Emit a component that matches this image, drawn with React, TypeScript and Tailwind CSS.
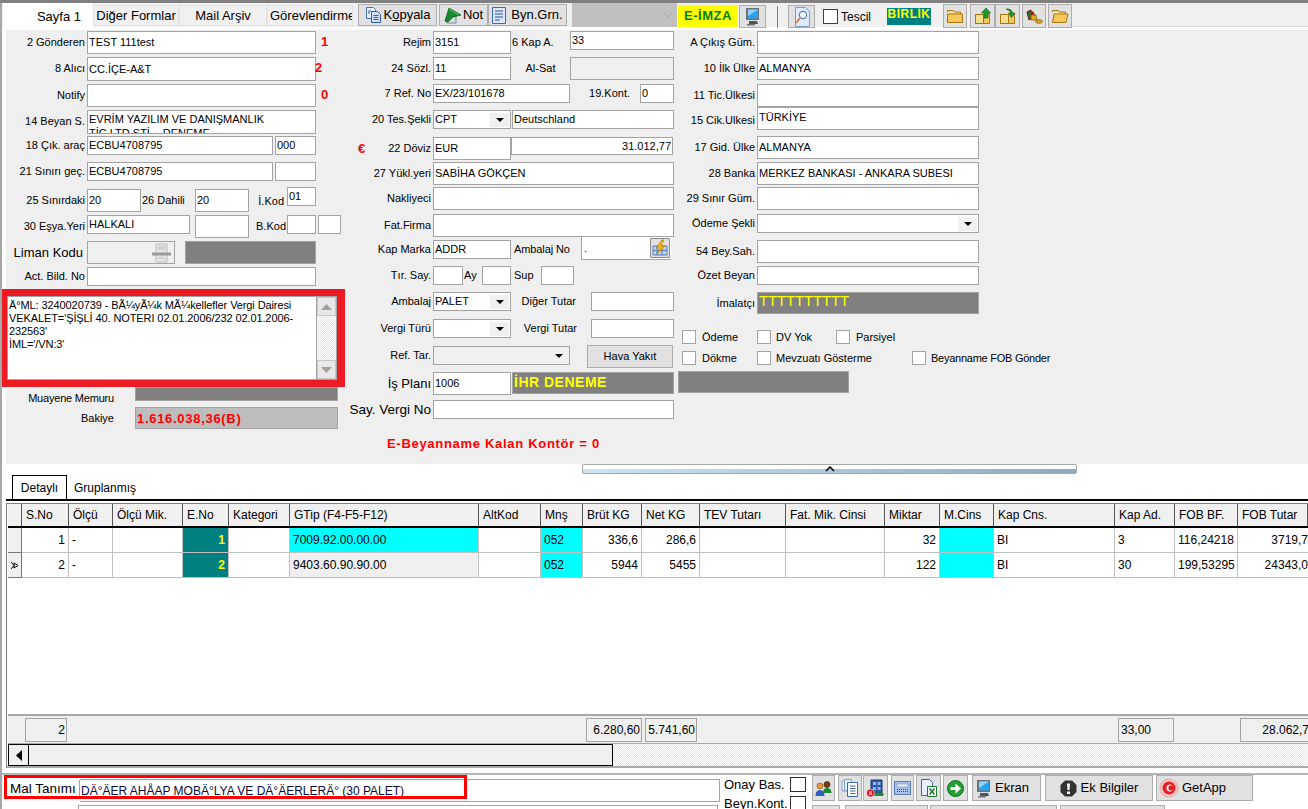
import type { ReactNode } from 'react'

// Gümrük beyanname formu ekranı

type BoxProps = { className?: string; children?: ReactNode }

function Field({ className = '', children }: BoxProps) {
  return (
    <div className={`flex shrink-0 items-center overflow-hidden whitespace-nowrap border border-[#a3a3a3] px-[1px] leading-none ${className}`}>
      {children}
    </div>
  )
}

function Label({ className = '', children }: BoxProps) {
  return <div className={`flex shrink-0 items-center justify-end whitespace-nowrap leading-none ${className}`}>{children}</div>
}

function Arrow() {
  return (
    <span className="flex h-[14px] w-[19px] shrink-0 items-center justify-center bg-[#f0f0f0]">
      <svg width="8" height="4" viewBox="0 0 8 4"><path d="M0 0h8L4 4z" fill="#000" /></svg>
    </span>
  )
}

function Check({ className = '' }: BoxProps) {
  return <span className={`block shrink-0 border border-[#a3a3a3] bg-white ${className}`} />
}

function Btn({ className = '', children }: BoxProps) {
  return (
    <div className={`flex shrink-0 items-center justify-center overflow-hidden whitespace-nowrap border border-[#adadad] bg-[#e1e1e1] ${className}`}>
      {children}
    </div>
  )
}

/* ---- küçük ikonlar ---- */

function PagesIcon() {
  return (
    <svg width="18" height="18" viewBox="0 0 18 18">
      <path d="M1.5 1.5h7l2 2v9h-9z" fill="#e8f0fb" stroke="#4a76b8" />
      <path d="M6.5 5.5h6l3 3v8h-9z" fill="#cfe0f7" stroke="#2f5fa8" />
      <path d="M8.5 9.5h5M8.5 11.5h5M8.5 13.5h5M3 5h3M3 7h2" stroke="#2f5fa8" />
    </svg>
  )
}

function NoteIcon() {
  return (
    <svg width="19" height="19" viewBox="0 0 19 19">
      <path d="M3 10h9v7H3z" fill="#d6dee8" stroke="#7b8794" />
      <path d="M1 15 5 2l12 7-8 2-5 5z" fill="#188a2c" stroke="#0c5c1a" strokeWidth="0.8" />
      <path d="M5 3l10 6" stroke="#5cc46c" />
    </svg>
  )
}

function DocLinesIcon() {
  return (
    <svg width="14" height="17" viewBox="0 0 14 17">
      <path d="M.5.5h13v16H.5z" fill="#dbe7f8" stroke="#3f69ad" />
      <path d="M3 4h8M3 7h8M3 10h8M3 13h5" stroke="#27508f" />
    </svg>
  )
}

function MonitorIcon() {
  return (
    <svg width="16" height="19" viewBox="0 0 16 19">
      <path d="M1 1h13v12H1z" fill="#6c7278" />
      <path d="M3 2.5h10v9H3z" fill="#2aa3ee" />
      <path d="M3 2.5h10L3 9z" fill="#8fd4fb" />
      <path d="M4 14h8l1 3H4z" fill="#4f5459" />
      <path d="M2 17h8v1.5H2z" fill="#777" />
    </svg>
  )
}

function SearchDocIcon() {
  return (
    <svg width="16" height="20" viewBox="0 0 16 20">
      <path d="M1.5.5h10l4 4v15h-14z" fill="#dfeafb" stroke="#7f9ccc" />
      <circle cx="9" cy="8" r="3.6" fill="#fff" stroke="#5478b4" strokeWidth="1.2" />
      <path d="M6 11l-4 5" stroke="#d87a27" strokeWidth="1.8" />
    </svg>
  )
}

function FolderIcon({ open = false }: { open?: boolean }) {
  return (
    <svg width="18" height="15" viewBox="0 0 18 15">
      <path d="M1.5 3V1.5h6l1 1.5h6v2" fill="#f7dd8e" stroke="#a87414" />
      <path d={open ? 'M1.5 13.5 3 5h14l-2 8.5z' : 'M1.5 13.5V5h15v8.5z'} fill="#f5c75a" stroke="#a87414" />
    </svg>
  )
}

function FolderArrowIcon({ turn = false }: { turn?: boolean }) {
  return (
    <svg width="18" height="17" viewBox="0 0 18 17">
      <path d="M1.5 6v9.5h14V6h-5" fill="#f5c75a" stroke="#a87414" />
      <path d="M1.5 6.5h8v9h-8z" fill="#f7dd8e" stroke="#a87414" />
      {turn ? (
        <path d="M7 1c4-.5 6 1 6.5 4H16l-3.5 4.5L9.5 5H12c-.5-1.500-2-2.500-5-4z" fill="#1f9a2e" stroke="#0c5c1a" strokeWidth="0.6" />
      ) : (
        <path d="M12 0l4.500 5H14v5h-4V5H7.500z" fill="#1f9a2e" stroke="#0c5c1a" strokeWidth="0.6" />
      )}
    </svg>
  )
}

function CoinsIcon() {
  return (
    <svg width="17" height="15" viewBox="0 0 17 15">
      <path d="M1 3l4-2 1 8-3 2z" fill="#1c7a30" stroke="#7a1010" />
      <path d="M4 4l3-2 2 4-3 2z" fill="#b31818" />
      <path d="M5 6h5l1 5H5z" fill="#e7ae19" stroke="#7a5a08" strokeWidth="0.8" />
      <ellipse cx="13" cy="12.500" rx="3.500" ry="1.700" fill="#e7ae19" stroke="#7a5a08" strokeWidth="0.8" />
    </svg>
  )
}

function UsersIcon() {
  return (
    <svg width="17" height="17" viewBox="0 0 17 17">
      <circle cx="5" cy="6" r="3" fill="#e59b3a" stroke="#7a4a10" strokeWidth="0.6" />
      <path d="M0.500 16c0-4 1.500-6 4.500-6s4.500 2 4.500 6z" fill="#2e5fc4" />
      <circle cx="12" cy="4.500" r="3" fill="#7a3a12" stroke="#2a1505" strokeWidth="0.6" />
      <path d="M8 13c0-3.500 1.500-5 4-5s4.500 1.500 4.500 5z" fill="#1f8a34" />
    </svg>
  )
}

function ListDocsIcon() {
  return (
    <svg width="18" height="18" viewBox="0 0 18 18">
      <path d="M1 2h7v10H1z" fill="#e6f0fc" stroke="#7fa2d6" />
      <path d="M3.500.5h7v11h-7z" fill="#e6f0fc" stroke="#7fa2d6" />
      <path d="M6.500 3.500h10v14h-10z" fill="#fff" stroke="#3f69ad" />
      <path d="M9 7h5.500M9 9.500h5.500M9 12h5.500M9 14.500h5.500" stroke="#3f69ad" />
    </svg>
  )
}

function BuildingIcon() {
  return (
    <svg width="19" height="19" viewBox="0 0 19 19">
      <path d="M5 1h11v13H5z" fill="#2c5aa5" stroke="#1b3566" />
      <path d="M7 3h3v3H7zM11.500 3h3v3h-3zM7 8h3v3H7zM11.500 8h3v3h-3z" fill="#8fb4ea" />
      <path d="M6 16c4-3 9-3 12-1l-1 2H8z" fill="#20893a" />
      <circle cx="4.500" cy="14" r="4" fill="#d8131b" stroke="#fff" strokeWidth="0.6" />
      <path d="M3 13h3M3 15h3" stroke="#fff" />
    </svg>
  )
}

function KeypadIcon() {
  return (
    <svg width="17" height="14" viewBox="0 0 17 14">
      <path d="M.5.5h16v13H.5z" fill="#a9c2ea" stroke="#5b7bb3" />
      <path d="M3 3h11v3H3z" fill="#e8f0fb" stroke="#5b7bb3" strokeWidth="0.5" />
      <path d="M3 8.500h11M3 10.500h11" stroke="#2e4a80" strokeDasharray="1 1" />
    </svg>
  )
}

function ExcelIcon() {
  return (
    <svg width="17" height="18" viewBox="0 0 17 18">
      <path d="M1.500.5h8l3 3v13h-11z" fill="#e8f0fb" stroke="#3f69ad" />
      <path d="M7.500 7.500h9v10h-9z" fill="#fff" stroke="#1c7a30" />
      <path d="M9.500 9.500l5 6M14.500 9.500l-5 6" stroke="#1c7a30" strokeWidth="1.500" />
    </svg>
  )
}

function GoIcon() {
  return (
    <svg width="17" height="17" viewBox="0 0 17 17">
      <circle cx="8.500" cy="8.500" r="8" fill="#22a033" stroke="#136b20" />
      <path d="M3.500 7h5V3.500L14 8.500l-5.500 5V10h-5z" fill="#fff" />
    </svg>
  )
}

function AlertIcon() {
  return (
    <svg width="17" height="17" viewBox="0 0 17 17">
      <path d="M5 .5h7L16.500 5v7L12 16.500H5L.5 12V5z" fill="#333" />
      <path d="M7 3.500h3l-.5 6.500h-2zM7 11.500h3v2.500H7z" fill="#fff" />
    </svg>
  )
}

function EmblemIcon() {
  return (
    <svg width="20" height="20" viewBox="0 0 20 20">
      <circle cx="10" cy="10" r="9" fill="#f6c4c4" stroke="#e58a8a" strokeDasharray="1.500 1" />
      <circle cx="10" cy="10" r="6.500" fill="#e31e24" />
      <circle cx="11" cy="10" r="3.500" fill="#fff" />
      <circle cx="12.200" cy="10" r="2.800" fill="#e31e24" />
    </svg>
  )
}

function PrinterIcon() {
  return (
    <svg width="21" height="20" viewBox="0 0 21 20">
      <path d="M5 1h11v18H5z" fill="#e4e4e4" stroke="#bdbdbd" />
      <path d="M1 9.500h19v3H1z" fill="#9a9a9a" />
      <path d="M7 4h7M7 6h7M7 15h7" stroke="#bdbdbd" />
    </svg>
  )
}

function BoltIcon() {
  return (
    <svg width="20" height="20" viewBox="0 0 20 20">
      <path d="M.5.5h19v19H.5z" fill="#e1e1e1" stroke="#8d8d8d" />
      <path d="M3 8h14v9H3z" fill="#bcd3f2" stroke="#5b7bb3" />
      <path d="M7 8v9M12 8v9M3 12.500h14" stroke="#5b7bb3" />
      <path d="M12 2l-6 8h4l-3 6 8-8h-4l3-6z" fill="#f5b912" stroke="#a66f06" strokeWidth="0.6" />
    </svg>
  )
}

/* ---- üst sekmeler ve araç çubuğu ---- */

function TopBar() {
  return (
    <div className="flex h-[27px] shrink-0 items-start bg-[linear-gradient(to_bottom,#f0f0f0_24px,#fff_24px)] pl-[1px] text-[13px]">
      <div className="flex h-[27px] w-[90px] shrink-0 items-center justify-center bg-white pl-[22px]">Sayfa 1</div>
      <div className="mt-[2px] flex h-[21px] w-[86px] shrink-0 items-center justify-center border border-[#e2e2e2]">Diğer Formlar</div>
      <div className="mt-[2px] flex h-[21px] w-[88px] shrink-0 items-center justify-center border border-[#e2e2e2]">Mail Arşiv</div>
      <div className="mt-[2px] flex h-[21px] w-[86px] shrink-0 items-center overflow-hidden whitespace-nowrap border border-[#e2e2e2] pl-[2px]">Görevlendirme</div>
      <Btn className="ml-[5px] mt-[1px] h-[22px] w-[79px] gap-[1px]">
        <PagesIcon />
        <span>K<span className="underline">o</span>pyala</span>
      </Btn>
      <Btn className="ml-[2px] mt-[1px] h-[22px] w-[49px]">
        <NoteIcon />
        <span>Not</span>
      </Btn>
      <Btn className="mt-[1px] h-[22px] w-[79px] gap-[5px]">
        <DocLinesIcon />
        <span>Byn.Grn.</span>
      </Btn>
      <div className="ml-[5px] flex h-[24px] w-[105px] shrink-0 items-center justify-end bg-[#c0c0c0] pr-[4px]">
        <svg width="10" height="6" viewBox="0 0 10 6"><path d="M1 1l4 4 4-4" fill="none" stroke="#a8a8a8" /></svg>
      </div>
      <div className="ml-[1px] mt-[2px] flex h-[22px] w-[60px] shrink-0 items-center justify-center bg-[#ffff00] text-[13px] font-bold tracking-[0.5px] text-[#008000]">E-İMZA</div>
      <Btn className="ml-[1px] mt-[2px] h-[23px] w-[27px]"><MonitorIcon /></Btn>
      <div className="ml-[11px] mt-[3px] h-[22px] w-[1px] shrink-0 bg-[#808080]" />
      <Btn className="ml-[10px] mt-[2px] h-[23px] w-[27px]"><SearchDocIcon /></Btn>
      <Check className="ml-[8px] mt-[6px] h-[15px] w-[15px] !border-[#404040]" />
      <span className="ml-[3px] mt-[5px] w-[30px] shrink-0 text-[12px]">Tescil</span>
      <div className="ml-[16px] mt-[5px] flex h-[17px] w-[44px] shrink-0 items-start justify-center bg-[#008080] text-[12px] font-bold leading-[13px] tracking-[0.5px] text-[#ffff00]">BİRLİK</div>
      <Btn className="ml-[12px] mt-[1px] h-[24px] w-[24px]"><FolderIcon /></Btn>
      <Btn className="ml-[3px] mt-[1px] h-[24px] w-[25px]"><FolderArrowIcon /></Btn>
      <Btn className="mt-[1px] h-[24px] w-[25px]"><FolderArrowIcon turn /></Btn>
      <Btn className="ml-[2px] mt-[1px] h-[24px] w-[24px]"><CoinsIcon /></Btn>
      <Btn className="ml-[2px] mt-[1px] h-[24px] w-[24px]"><FolderIcon open /></Btn>
      <div className="mt-[23px] h-[1px] flex-1 bg-[#d8d8d8]" />
    </div>
  )
}

/* ---- form sütunları ---- */

function LeftColumn() {
  return (
    <div className="flex w-[343px] shrink-0 flex-col pt-[1px]">
      <div className="flex h-[26px] items-start">
        <Label className="mr-[2px] h-[23px] w-[79px]">2 Gönderen</Label>
        <Field className="h-[23px] w-[229px] bg-white">TEST 111test</Field>
        <span className="ml-[5px] mt-[1px] text-[13px] font-bold text-[#ff0000]">1</span>
      </div>
      <div className="flex h-[27px] items-start">
        <Label className="mr-[2px] h-[23px] w-[79px]">8 Alıcı</Label>
        <Field className="h-[24px] w-[229px] bg-white">CC.İÇE-A&amp;T</Field>
        <span className="-ml-[1px] mt-[1px] text-[13px] font-bold text-[#ff0000]">2</span>
      </div>
      <div className="flex h-[26px] items-start">
        <Label className="mr-[2px] h-[23px] w-[79px]">Notify</Label>
        <Field className="h-[23px] w-[229px] bg-white" />
        <span className="ml-[5px] mt-[1px] text-[13px] font-bold text-[#ff0000]">0</span>
      </div>
      <div className="flex h-[26px] items-start">
        <Label className="mr-[2px] h-[23px] w-[79px]">14 Beyan S.</Label>
        <Field className="h-[24px] w-[229px] !items-start bg-white pl-[1px] pt-[1px] !leading-[14px]">
          <span className="whitespace-normal">EVRİM YAZILIM VE DANIŞMANLIK TİC.LTD.ŞTİ. - DENEME</span>
        </Field>
      </div>
      <div className="flex h-[26px] items-start">
        <Label className="mr-[2px] h-[19px] w-[79px]">18 Çık. araç</Label>
        <Field className="h-[19px] w-[186px] bg-white">ECBU4708795</Field>
        <Field className="ml-[2px] h-[19px] w-[41px] bg-white">000</Field>
      </div>
      <div className="flex h-[25px] items-start">
        <Label className="mr-[2px] h-[19px] w-[79px]">21 Sınırı geç.</Label>
        <Field className="h-[19px] w-[186px] bg-white">ECBU4708795</Field>
        <Field className="ml-[2px] h-[19px] w-[41px] bg-white" />
      </div>
      <div className="flex h-[28px] items-start">
        <Label className="mr-[2px] mt-[2px] h-[23px] w-[79px]">25 Sınırdaki</Label>
        <Field className="mt-[2px] h-[23px] w-[54px] bg-white">20</Field>
        <Label className="mt-[2px] h-[23px] w-[54px] !justify-start pl-[1px]">26 Dahili</Label>
        <Field className="mt-[2px] h-[23px] w-[54px] bg-white">20</Field>
        <Label className="mt-[2px] h-[25px] w-[38px] pr-[3px]">İ.Kod</Label>
        <Field className="h-[19px] w-[29px] bg-white">01</Field>
      </div>
      <div className="flex h-[26px] items-start">
        <Label className="mr-[2px] h-[23px] w-[79px]">30 Eşya.Yeri</Label>
        <Field className="h-[19px] w-[103px] bg-white">HALKALI</Field>
        <Field className="ml-[5px] h-[23px] w-[54px] bg-white" />
        <Label className="h-[23px] w-[38px] pr-[1px]">B.Kod</Label>
        <Field className="h-[19px] w-[29px] bg-white" />
        <Field className="ml-[2px] h-[19px] w-[23px] bg-white" />
      </div>
      <div className="flex h-[26px] items-start">
        <Label className="mr-[4px] h-[23px] w-[77px] text-[13px]">Liman Kodu</Label>
        <Field className="h-[23px] w-[88px] justify-end bg-[#efefef] pr-[2px]"><PrinterIcon /></Field>
        <Field className="ml-[10px] h-[23px] w-[131px] bg-[#808080]" />
      </div>
      <div className="flex h-[22px] items-start">
        <Label className="mr-[2px] h-[19px] w-[79px]">Act. Bild. No</Label>
        <Field className="h-[19px] w-[229px] bg-white" />
      </div>
      <div className="-ml-[4px] flex h-[98px] w-[343px] border-b-[7px] border-l-[5px] border-r-[8px] border-t-[7px] border-[#ed1c24] bg-white">
        <div className="flex-1 overflow-hidden border border-[#a3a3a3] border-r-0 px-[1px] pt-[2px] leading-[13px] tracking-[-0.1px]">
          <div>Ä°ML: 3240020739 - BÃ¼yÃ¼k MÃ¼kellefler Vergi Dairesi</div>
          <div>VEKALET='ŞİŞLİ 40. NOTERI 02.01.2006/232 02.01.2006-</div>
          <div>232563'</div>
          <div>İML='/VN:3'</div>
        </div>
        <div className="flex w-[21px] shrink-0 flex-col justify-between border border-[#a3a3a3] bg-[repeating-conic-gradient(#e4e4e4_0%_25%,#fff_0%_50%)] bg-size-[2px_2px]">
          <div className="flex h-[19px] items-center justify-center border border-[#c8c8c8] bg-[#e8e8e8]">
            <svg width="11" height="6" viewBox="0 0 11 6"><path d="M5.500 0l5.500 6H0z" fill="#a0a0a0" /></svg>
          </div>
          <div className="flex h-[19px] items-center justify-center border border-[#c8c8c8] bg-[#e8e8e8]">
            <svg width="11" height="6" viewBox="0 0 11 6"><path d="M0 0h11L5.500 6z" fill="#a0a0a0" /></svg>
          </div>
        </div>
      </div>
      <div className="flex h-[20px] items-start">
        <Label className="mr-[21px] h-[22px] w-[108px] pt-[1px] tracking-[-0.2px]">Muayene Memuru</Label>
        <Field className="h-[14px] w-[203px] bg-[#808080]" />
      </div>
      <div className="flex items-start">
        <Label className="mr-[21px] h-[22px] w-[108px]">Bakiye</Label>
        <Field className="h-[22px] w-[203px] bg-[#bdbdbd] pl-[1px] text-[13px] font-bold tracking-[0.7px] text-[#ff0000]">1.616.038,36(B)</Field>
      </div>
    </div>
  )
}

function MiddleColumn() {
  return (
    <div className="flex w-[333px] shrink-0 flex-col pt-[1px]">
      <div className="flex h-[26px] items-start">
        <Label className="mr-[2px] h-[23px] w-[82px]">Rejim</Label>
        <Field className="h-[23px] w-[78px] bg-white">3151</Field>
        <Label className="h-[23px] w-[59px] !justify-start pl-[1px]">6 Kap A.</Label>
        <Field className="h-[19px] w-[104px] bg-white">33</Field>
      </div>
      <div className="flex h-[27px] items-start">
        <Label className="mr-[2px] h-[23px] w-[82px]">24 Sözl.</Label>
        <Field className="h-[23px] w-[78px] bg-white">11</Field>
        <Label className="h-[23px] w-[59px] !justify-center">Al-Sat</Label>
        <Field className="h-[23px] w-[104px] bg-[#efefef]" />
      </div>
      <div className="flex h-[26px] items-start">
        <Label className="mr-[2px] h-[19px] w-[82px]">7 Ref. No</Label>
        <Field className="h-[19px] w-[137px] bg-white">EX/23/101678</Field>
        <Label className="h-[19px] w-[70px] pr-[10px]">19.Kont.</Label>
        <Field className="h-[19px] w-[34px] bg-white">0</Field>
      </div>
      <div className="flex h-[27px] items-start">
        <Label className="mr-[2px] h-[19px] w-[82px]">20 Tes.Şekli</Label>
        <Field className="h-[19px] w-[78px] justify-between bg-white pr-[1px]">CPT<Arrow /></Field>
        <Field className="ml-[1px] h-[19px] w-[162px] bg-white">Deutschland</Field>
      </div>
      <div className="flex h-[25px] items-start">
        <Label className="mr-[2px] h-[23px] w-[82px] !justify-between pl-[9px]">
          <span className="text-[13px] font-bold text-[#ff0000]">€</span>
          <span>22 Döviz</span>
        </Label>
        <Field className="h-[23px] w-[78px] bg-white">EUR</Field>
        <Field className="h-[18px] w-[162px] justify-end bg-white pr-[1px]">31.012,77</Field>
      </div>
      <div className="flex h-[25px] items-start">
        <Label className="mr-[2px] h-[23px] w-[82px]">27 Yükl.yeri</Label>
        <Field className="h-[23px] w-[241px] bg-white">SABİHA GÖKÇEN</Field>
      </div>
      <div className="flex h-[27px] items-start">
        <Label className="mr-[2px] h-[23px] w-[82px]">Nakliyeci</Label>
        <Field className="h-[23px] w-[241px] bg-white" />
      </div>
      <div className="flex h-[26px] items-start">
        <Label className="mr-[2px] h-[23px] w-[82px]">Fat.Firma</Label>
        <Field className="h-[23px] w-[241px] bg-white" />
      </div>
      <div className="flex h-[26px] items-start">
        <Label className="mr-[2px] h-[19px] w-[82px]">Kap Marka</Label>
        <Field className="h-[19px] w-[78px] bg-white">ADDR</Field>
        <Label className="h-[19px] w-[70px] !justify-start pl-[3px] tracking-[-0.1px]">Ambalaj No</Label>
        <Field className="-mt-[4px] h-[24px] w-[90px] justify-between !border-r-0 bg-white pl-[2px]">
          <span>.</span>
          <BoltIcon />
        </Field>
      </div>
      <div className="flex h-[26px] items-start">
        <Label className="mr-[2px] h-[19px] w-[82px]">Tır. Say.</Label>
        <Field className="h-[19px] w-[30px] bg-white" />
        <Label className="h-[19px] w-[19px] !justify-start pl-[1px]">Ay</Label>
        <Field className="h-[19px] w-[29px] bg-white" />
        <Label className="h-[19px] w-[30px] !justify-start pl-[3px]">Sup</Label>
        <Field className="h-[19px] w-[33px] bg-white" />
      </div>
      <div className="flex h-[27px] items-start">
        <Label className="mr-[2px] h-[19px] w-[82px]">Ambalaj</Label>
        <Field className="h-[19px] w-[78px] justify-between bg-white pr-[1px]">PALET<Arrow /></Field>
        <Label className="h-[19px] w-[80px] pr-[15px]">Diğer Tutar</Label>
        <Field className="h-[19px] w-[83px] bg-white" />
      </div>
      <div className="flex h-[27px] items-start">
        <Label className="mr-[2px] h-[19px] w-[82px]">Vergi Türü</Label>
        <Field className="h-[19px] w-[78px] justify-end bg-white pr-[1px]"><Arrow /></Field>
        <Label className="h-[19px] w-[80px] pr-[14px]">Vergi Tutar</Label>
        <Field className="h-[19px] w-[83px] bg-white" />
      </div>
      <div className="flex h-[26px] items-start">
        <Label className="mr-[2px] h-[19px] w-[82px]">Ref. Tar.</Label>
        <Field className="h-[19px] w-[137px] justify-end bg-[#efefef] pr-[1px]"><Arrow /></Field>
        <Btn className="-mt-[1px] ml-[17px] h-[23px] w-[86px]">Hava Yakıt</Btn>
      </div>
      <div className="flex h-[28px] items-start">
        <Label className="mr-[2px] h-[23px] w-[82px] text-[13px]">İş Planı</Label>
        <Field className="h-[23px] w-[78px] bg-white">1006</Field>
        <Field className="ml-[1px] h-[22px] w-[162px] bg-[#808080] pb-[2px] text-[14px] font-bold tracking-[0.5px] text-[#ffff00]">İHR DENEME</Field>
      </div>
      <div className="flex h-[19px] items-start">
        <Label className="mr-[2px] h-[19px] w-[82px] text-[13.5px]">Say. Vergi No</Label>
        <Field className="h-[19px] w-[241px] bg-white" />
      </div>
      <div className="ml-[38px] mt-[17px] whitespace-nowrap text-[13px] font-bold leading-[16px] tracking-[0.7px] text-[#ff0000]">
        E-Beyanname Kalan Kontör = 0
      </div>
    </div>
  )
}

function RightColumn() {
  return (
    <div className="flex w-[300px] shrink-0 flex-col pt-[1px]">
      <div className="flex h-[26px] items-start">
        <Label className="mr-[2px] h-[23px] w-[73px]">A Çıkış Güm.</Label>
        <Field className="h-[23px] w-[222px] bg-white" />
      </div>
      <div className="flex h-[27px] items-start">
        <Label className="mr-[2px] h-[23px] w-[73px]">10 İlk Ülke</Label>
        <Field className="h-[23px] w-[222px] bg-white">ALMANYA</Field>
      </div>
      <div className="flex h-[23px] items-start">
        <Label className="mr-[2px] h-[23px] w-[73px]">11 Tic.Ülkesi</Label>
        <Field className="h-[23px] w-[222px] bg-white" />
      </div>
      <div className="flex h-[29px] items-start">
        <Label className="mr-[2px] h-[23px] w-[73px] pt-[3px]">15 Cik.Ulkesi</Label>
        <Field className="h-[23px] w-[222px] bg-white pb-[2px]">TÜRKİYE</Field>
      </div>
      <div className="flex h-[26px] items-start">
        <Label className="mr-[2px] h-[23px] w-[73px]">17 Gid. Ülke</Label>
        <Field className="h-[23px] w-[222px] bg-white">ALMANYA</Field>
      </div>
      <div className="flex h-[25px] items-start">
        <Label className="mr-[2px] h-[23px] w-[73px]">28 Banka</Label>
        <Field className="h-[23px] w-[222px] bg-white">MERKEZ BANKASI - ANKARA SUBESI</Field>
      </div>
      <div className="flex h-[27px] items-start">
        <Label className="mr-[2px] h-[23px] w-[73px]">29 Sınır Güm.</Label>
        <Field className="h-[23px] w-[222px] bg-white" />
      </div>
      <div className="flex h-[26px] items-start">
        <Label className="mr-[2px] h-[19px] w-[73px]">Ödeme Şekli</Label>
        <Field className="h-[19px] w-[222px] justify-end bg-white pr-[1px]"><Arrow /></Field>
      </div>
      <div className="flex h-[26px] items-start">
        <Label className="mr-[2px] h-[23px] w-[73px]">54 Bey.Sah.</Label>
        <Field className="h-[23px] w-[222px] bg-white" />
      </div>
      <div className="flex h-[26px] items-start">
        <Label className="mr-[2px] h-[19px] w-[73px]">Özet Beyan</Label>
        <Field className="h-[19px] w-[222px] bg-white" />
      </div>
      <div className="flex h-[37px] items-start">
        <Label className="mr-[2px] h-[22px] w-[73px]">İmalatçı</Label>
        <Field className="h-[22px] w-[222px] !items-start bg-[#808080] pl-[1px] text-[15px] !leading-[16px] tracking-[-0.15px] text-[#ffff00]">TTTTTTTTTT</Field>
      </div>
      <div className="flex h-[21px] items-start">
        <div className="flex w-[75px] shrink-0 items-center gap-[6px]"><Check className="h-[14px] w-[14px]" />Ödeme</div>
        <div className="flex w-[79px] shrink-0 items-center gap-[5px]"><Check className="h-[14px] w-[14px]" />DV Yok</div>
        <div className="flex items-center gap-[6px]"><Check className="h-[14px] w-[14px]" />Parsiyel</div>
      </div>
      <div className="flex h-[21px] items-start">
        <div className="flex w-[75px] shrink-0 items-center gap-[6px]"><Check className="h-[14px] w-[14px]" />Dökme</div>
        <div className="flex w-[155px] shrink-0 items-center gap-[5px]"><Check className="h-[14px] w-[14px]" />Mevzuatı Gösterme</div>
        <div className="flex items-center gap-[5px] whitespace-nowrap tracking-[-0.25px]"><Check className="h-[14px] w-[14px]" />Beyanname FOB Gönder</div>
      </div>
      <Field className="-ml-[4px] h-[22px] w-[171px] bg-[#808080]" />
    </div>
  )
}

/* ---- kalem tablosu ---- */

const gridCols = 'grid grid-cols-[14px_47px_44px_70px_46px_61px_189px_62px_42px_59px_58px_86px_99px_55px_54px_121px_60px_63px_70px]'

const headers = ['', 'S.No', 'Ölçü', 'Ölçü Mik.', 'E.No', 'Kategori', 'GTip (F4-F5-F12)', 'AltKod', 'Mnş', 'Brüt KG', 'Net KG', 'TEV Tutarı', 'Fat. Mik. Cinsi', 'Miktar', 'M.Cins', 'Kap Cns.', 'Kap Ad.', 'FOB BF.', 'FOB Tutar']

const rows = [
  { sno: '1', no: '1', gtip: '7009.92.00.00.00', gtipBg: 'bg-[#00ffff]', brut: '336,6', net: '286,6', miktar: '32', kapAd: '3', bf: '116,24218', tutar: '3719,7', mark: false },
  { sno: '2', no: '2', gtip: '9403.60.90.90.00', gtipBg: 'bg-[#efefef]', brut: '5944', net: '5455', miktar: '122', kapAd: '30', bf: '199,53295', tutar: '24343,0', mark: true },
]

function Cell({ className = '', children }: BoxProps) {
  return (
    <div className={`flex h-[25px] items-center overflow-hidden whitespace-nowrap border-b border-r border-[#c0c0c0] px-[3px] leading-none ${className}`}>
      {children}
    </div>
  )
}

function ItemsGrid() {
  return (
    <div className="h-[210px] bg-white text-[12px]">
      <div className={`${gridCols} h-[24px] border-b-2 border-black bg-[#f0f0f0]`}>
        {headers.map((h, i) => (
          <div key={i} className="flex items-center overflow-hidden whitespace-nowrap border-r border-[#555] pl-[4px] leading-none">{h}</div>
        ))}
      </div>
      {rows.map(r => (
        <div key={r.sno} className={gridCols}>
          <Cell className="justify-center !border-[#777] !px-0 bg-[#f0f0f0]">
            {r.mark && (
              <svg width="9" height="9" viewBox="0 0 9 9"><path d="M1 1l3 3.500-3 3.500M4 2l4 2.500-4 2.500z" fill="none" stroke="#000" /></svg>
            )}
          </Cell>
          <Cell className="justify-end">{r.sno}</Cell>
          <Cell>-</Cell>
          <Cell />
          <Cell className="justify-end bg-[#008080] font-bold text-[#ffff00]">{r.no}</Cell>
          <Cell />
          <Cell className={r.gtipBg}>{r.gtip}</Cell>
          <Cell />
          <Cell className="bg-[#00ffff]">052</Cell>
          <Cell className="justify-end">{r.brut}</Cell>
          <Cell className="justify-end">{r.net}</Cell>
          <Cell />
          <Cell />
          <Cell className="justify-end">{r.miktar}</Cell>
          <Cell className="bg-[#00ffff]" />
          <Cell>BI</Cell>
          <Cell>{r.kapAd}</Cell>
          <Cell>{r.bf}</Cell>
          <Cell className="justify-end !border-r-0 !pr-0">{r.tutar}</Cell>
        </div>
      ))}
    </div>
  )
}

function GridFooter() {
  return (
    <div className="flex h-[29px] items-center border-t-2 border-[#a8a8a8] bg-[#efefef] text-[12px]">
      <Field className="ml-[17px] h-[24px] w-[42px] justify-end pr-[1px]">2</Field>
      <Field className="ml-[519px] h-[24px] w-[56px] justify-end pr-[1px]">6.280,60</Field>
      <Field className="ml-[3px] h-[24px] w-[52px] justify-end pr-[1px]">5.741,60</Field>
      <Field className="ml-[421px] h-[24px] w-[56px] pl-[2px]">33,00</Field>
      <Field className="ml-[66px] h-[24px] w-[70px] justify-end !border-r-0">28.062,7</Field>
    </div>
  )
}

function HScroll() {
  return (
    <div className="flex h-[23px] border-t border-[#a8a8a8] bg-[repeating-conic-gradient(#e8e8e8_0%_25%,#fff_0%_50%)] bg-size-[2px_2px]">
      <div className="flex w-[21px] items-center justify-center border border-black bg-[#efefef]">
        <svg width="6" height="11" viewBox="0 0 6 11"><path d="M6 0v11L0 5.500z" fill="#000" /></svg>
      </div>
      <div className="w-[584px] border border-l-0 border-black bg-[#efefef]" />
    </div>
  )
}

/* ---- alt satır ---- */

function BottomBar() {
  return (
    <div className="flex flex-1 items-start overflow-hidden border-t border-[#b4b4b4] text-[12px]">
      <div className="relative h-[34px] w-[716px] shrink-0">
        <div className="flex items-start">
          <div className="ml-[4px] mt-[5px] w-[74px] shrink-0 whitespace-nowrap border-r border-[#a3a3a3] pl-[4px] text-[13.5px] leading-[18px]">Mal Tanımı</div>
          <Field className="mt-[4px] h-[23px] w-[640px] !border-l-0 pl-[1px] text-[#0a0a3c]">DÄ°ÄER AHÅAP MOBÄ°LYA VE DÄ°ÄERLERÄ° (30 PALET)</Field>
        </div>
        <div className="absolute left-[2px] top-0 h-[24px] w-[463px] border-[3px] border-[#ff0000]" />
        <Field className="ml-[76px] mt-[3px] h-[10px] w-[640px]" />
      </div>
      <div className="ml-[6px] flex w-[82px] shrink-0 flex-col text-[13px]">
        <div className="flex h-[19px] items-center justify-between">Onay Bas.<Check className="h-[15px] w-[16px] !border-[#303030]" /></div>
        <div className="flex h-[19px] items-center justify-between">Beyn.Kont.<Check className="h-[15px] w-[16px] !border-[#303030]" /></div>
      </div>
      <div className="flex flex-col">
        <div className="ml-[6px] flex h-[26px]">
          <Btn className="h-[26px] w-[23px]"><UsersIcon /></Btn>
          <Btn className="ml-[3px] h-[26px] w-[24px]"><ListDocsIcon /></Btn>
          <Btn className="ml-[1px] h-[26px] w-[25px]"><BuildingIcon /></Btn>
          <Btn className="ml-[3px] h-[26px] w-[23px]"><KeypadIcon /></Btn>
          <Btn className="ml-[2px] h-[26px] w-[25px]"><ExcelIcon /></Btn>
          <Btn className="ml-[2px] h-[26px] w-[25px]"><GoIcon /></Btn>
          <Btn className="ml-[4px] h-[26px] w-[69px] !justify-start gap-[3px] pl-[3px] text-[13px]"><MonitorIcon />Ekran</Btn>
          <Btn className="ml-[4px] h-[26px] w-[108px] gap-[4px] text-[13px]"><AlertIcon />Ek Bilgiler</Btn>
          <Btn className="ml-[3px] h-[26px] w-[97px] !justify-start gap-[3px] pl-[2px] text-[13px]"><EmblemIcon />GetApp</Btn>
        </div>
        <div className="ml-[6px] mt-[4px] flex">
          <Btn className="h-[8px] w-[28px]" />
          <Btn className="ml-[5px] h-[8px] w-[83px]" />
          <Btn className="ml-[2px] h-[8px] w-[127px]" />
          <Btn className="ml-[3px] h-[8px] w-[105px]" />
        </div>
      </div>
    </div>
  )
}

export default function App() {
  return (
    <div className="flex h-[809px] w-[1308px] flex-col overflow-hidden bg-white font-['Liberation_Sans',Arial,sans-serif] text-[11px] text-black">
      <div className="h-[3px] shrink-0 bg-[#808080]" />
      <div className="flex min-h-0 flex-1 flex-col border-l-2 border-[#a8a8a8]">
        <TopBar />
        <div className="ml-[4px] flex h-[434px] shrink-0 bg-[#efefef]">
          <LeftColumn />
          <MiddleColumn />
          <RightColumn />
        </div>

        <div className="ml-[580px] flex h-[10px] w-[495px] shrink-0 items-end justify-center rounded-[2px] border border-[#a8a8a8] bg-[linear-gradient(to_bottom,#fff_50%,transparent_50%),linear-gradient(to_right,#cfe4f2,#8ea9bc)]">
          <svg width="10" height="6" viewBox="0 0 10 6" className="mb-[1px]"><path d="M1 5l4-4 4 4" fill="none" stroke="#000" strokeWidth="1.500" /></svg>
        </div>

        <div className="ml-[4px] mt-[3px] flex h-[24px] shrink-0 items-end border-b-2 border-black text-[12px]">
          <div className="ml-[6px] flex h-[24px] w-[55px] items-center justify-center border border-b-0 border-black">Detaylı</div>
          <div className="ml-[7px] flex h-[22px] items-center">Gruplanmış</div>
        </div>

        <div className="ml-[4px] mt-[2px] shrink-0 border-b-2 border-l border-t border-[#808080] border-b-[#a8a8a8] pl-[1px]">
          <ItemsGrid />
          <GridFooter />
          <HScroll />
        </div>

        <div className="mt-[5px] h-[1px] shrink-0 bg-[#b4b4b4]" />
        <BottomBar />
      </div>
    </div>
  )
}
